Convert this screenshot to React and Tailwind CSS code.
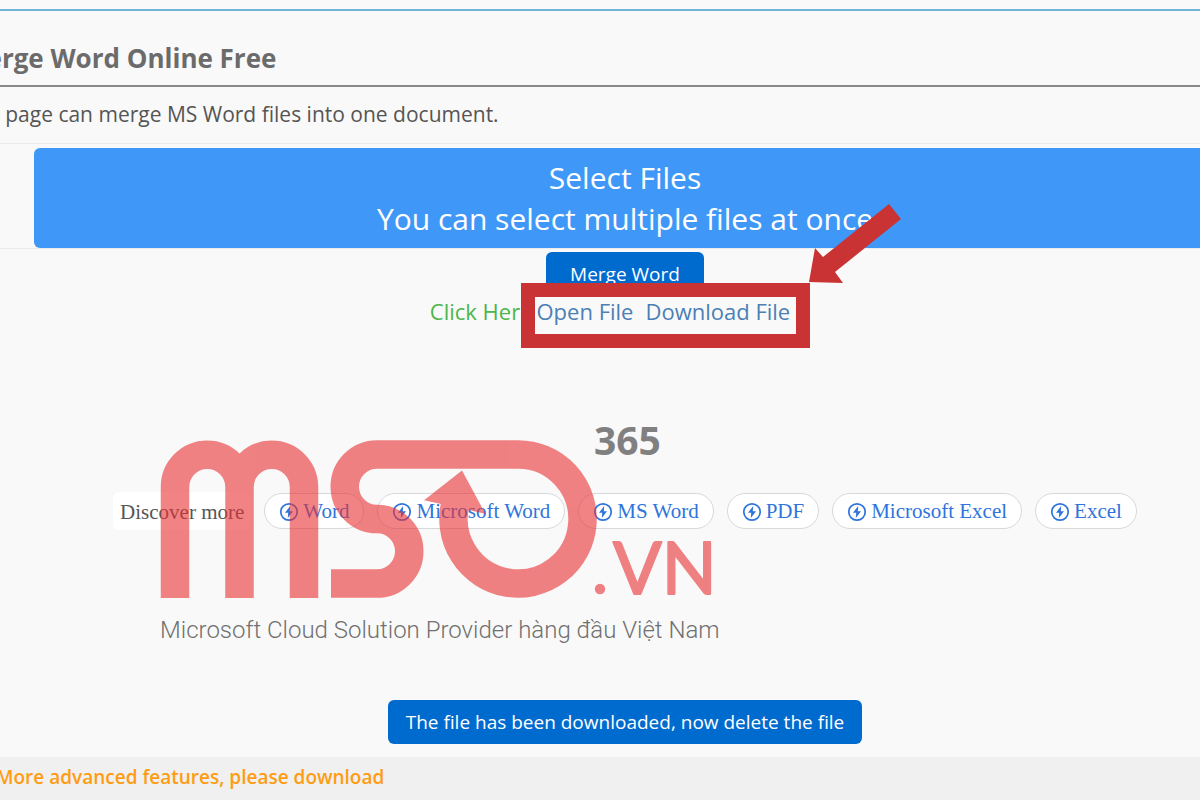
const topics = ["Word", "Microsoft Word", "MS Word", "PDF", "Microsoft Excel", "Excel"];

function BoltIcon() {
  return (
    <svg viewBox="0 0 20 20" className="h-5 w-5 shrink-0" aria-hidden="true">
      <circle cx="10" cy="10" r="8.2" fill="none" stroke="currentColor" strokeWidth="1.7" />
      <path d="M11.2 4 6 10.8h3.2L8.8 16 14 9.2h-3.2z" fill="currentColor" />
    </svg>
  );
}

function TopicLink({ label }) {
  return (
    <a
      href="#"
      className="flex h-9 items-center gap-1 rounded-full border border-[#d6d8db] bg-white px-3.5 pt-0.5 text-[21px] whitespace-nowrap text-[#2f74dc]"
    >
      <BoltIcon />
      {label}
    </a>
  );
}

function Watermark() {
  return (
    <svg viewBox="0 -20 600 250" className="h-[250px] w-[600px]" role="img" aria-label="MSO365.vn">
      <g opacity="0.6" fill="#ea3133">
        <g fill="none" stroke="#ea3133" strokeWidth="28.5">
          <path d="M20 178V67a32.25 32.25 0 0 1 64.5 0V178M84.5 67a32.25 32.25 0 0 1 64.5 0V178" />
          <path d="M176 163.5H222a32.25 32.25 0 0 0 0-64.5a32.25 32.25 0 0 1 0-64.5H363A64.5 64.5 0 1 1 300.8 82" />
        </g>
        <path d="M307 50.5 269 80.3 330.3 93.7z" />
        <circle cx="445" cy="169" r="5.2" />
        <text
          x="458"
          y="174"
          fontSize="72"
          fontFamily="Lato, sans-serif"
          stroke="#ea3133"
          strokeWidth="2"
          strokeLinejoin="round"
        >
          VN
        </text>
      </g>
      <text x="439" y="35" fontSize="39" fontWeight="700" fontFamily="'Noto Sans', sans-serif" fill="#808080">
        365
      </text>
      <text x="5" y="218" fontSize="24" fontWeight="300" fontFamily="Roboto, sans-serif" fill="#707070">
        Microsoft Cloud Solution Provider hàng đầu Việt Nam
      </text>
    </svg>
  );
}

function Callout() {
  return (
    <>
      <span className="pointer-events-none absolute -top-3 -right-5 -bottom-5 -left-4 border-[14px] border-[#c93333]" />
      <svg
        viewBox="0 0 94 80"
        className="pointer-events-none absolute -right-[113px] bottom-full mb-3 h-20 w-[94px]"
        aria-hidden="true"
      >
        <path d="M0 79 6 45 14 54 80 1 92 16 26 69 34 80z" fill="#c93333" />
      </svg>
    </>
  );
}

export default function App() {
  return (
    <div className="min-h-screen overflow-hidden bg-[#f9f9f9] font-['Open_Sans',sans-serif] text-[#555]">
      <div className="-mr-4">
        <header className="h-[11px] border-b-2 border-[#71b5d6]" />

        <h1 className="-ml-[38px] flex h-[74px] items-center pt-5 text-[26px] font-bold whitespace-nowrap text-[#6b6b6b]">
          Merge Word Online Free
        </h1>
        <p className="-ml-10 flex h-[58px] items-center border-t-2 border-[#8a8a8a] text-[21px] whitespace-nowrap">
          This page can merge MS Word files into one document.
        </p>

        <div className="border-y border-[#ebebeb] pt-1 pl-[34px]">
          <button
            type="button"
            className="block h-[100px] w-full rounded-md bg-[#3f98f7] text-[30px] leading-[41px] text-white"
          >
            Select Files
            <br />
            You can select multiple files at once
          </button>
        </div>

        <main className="relative flex flex-col items-center pt-[3px] pl-[34px]">
          <button type="button" className="h-11 rounded-md bg-[#006bcf] px-6 text-[19px] font-medium text-white">
            Merge Word
          </button>

          <div className="flex h-[30px] items-center gap-1 pr-[30px] text-[22px] whitespace-nowrap">
            <span className="text-[#4cb648]">Click Here</span>
            <span className="relative flex gap-3 text-[#4b7fb5]">
              <a href="#">Open File</a>
              <a href="#">Download File</a>
              <Callout />
            </span>
          </div>

          <nav className="mt-[166px] flex items-center gap-[13px] font-['Liberation_Serif',serif]">
            <span className="rounded-md bg-white px-[7px] pt-1.5 pb-1 text-[21px] leading-7 whitespace-nowrap">
              Discover more
            </span>
            {topics.map((label) => (
              <TopicLink key={label} label={label} />
            ))}
          </nav>

          <button
            type="button"
            className="mt-[170px] h-11 rounded-md bg-[#006bcf] px-[18px] text-[19px] font-medium text-white"
          >
            The file has been downloaded, now delete the file
          </button>

          <div className="pointer-events-none absolute top-[151px] left-[155px]">
            <Watermark />
          </div>
        </main>

        <footer className="mt-[13px] h-11 bg-[#f0f0f0] leading-10">
          <a href="#" className="-ml-1 text-[19px] font-semibold whitespace-nowrap text-[#ff9c12]">
            More advanced features, please download
          </a>
        </footer>
      </div>
    </div>
  );
}
